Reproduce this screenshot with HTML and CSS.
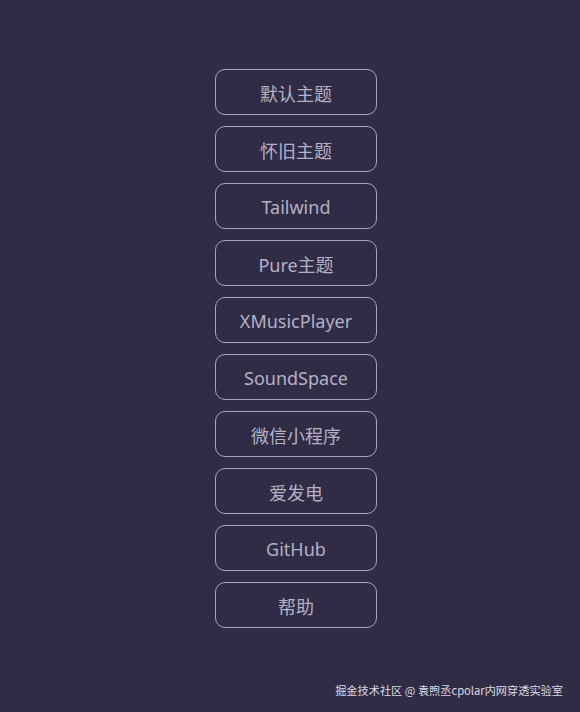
FILE: index.html
```html
<!DOCTYPE html>
<html lang="zh">
<head>
<meta charset="utf-8">
<link rel="stylesheet" href="styles.css">
</head>
<body>
<div class="page">
  <nav class="menu">
    <button class="btn">默认主题</button>
    <button class="btn">怀旧主题</button>
    <button class="btn">Tailwind</button>
    <button class="btn">Pure主题</button>
    <button class="btn">XMusicPlayer</button>
    <button class="btn">SoundSpace</button>
    <button class="btn">微信小程序</button>
    <button class="btn">爱发电</button>
    <button class="btn">GitHub</button>
    <button class="btn">帮助</button>
  </nav>
  <div class="watermark">掘金技术社区 @ 袁煦丞cpolar内网穿透实验室</div>
</div>
</body>
</html>
```
FILE: styles.css
```css
html, body {
  margin: 0;
  padding: 0;
  background: #312c45;
}
.page {
  width: 580px;
  height: 712px;
  box-sizing: border-box;
  padding-top: 69px;
  display: flex;
  flex-direction: column;
  font-family: "Noto Sans", "Noto Sans CJK SC", sans-serif;
}
.menu {
  display: flex;
  flex-direction: column;
  gap: 11px;
  padding-left: 215px;
}
.btn {
  width: 162px;
  height: 46px;
  box-sizing: border-box;
  border: 1px solid #aaa4c2;
  border-radius: 10px;
  background: transparent;
  color: #b4b0c6;
  font-family: "Noto Sans", "Noto Sans CJK SC", sans-serif;
  font-size: 18px;
  padding: 2px 0 0;
}
.watermark {
  margin-top: auto;
  margin-bottom: 14px;
  padding-right: 17px;
  text-align: right;
  font-size: 11.2px;
  color: #dcdae4;
  font-family: "Noto Sans CJK SC", sans-serif;
}
```
